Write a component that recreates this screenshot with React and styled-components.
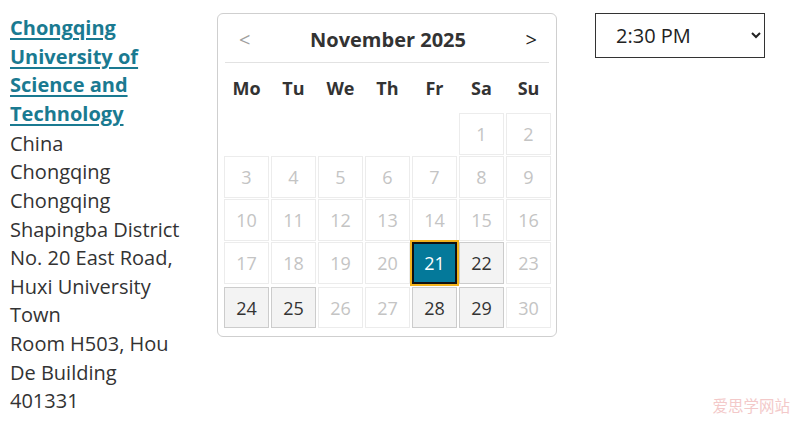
import React from "react";
import styled, { createGlobalStyle } from "styled-components";

const GlobalStyle = createGlobalStyle`
  html, body {
    margin: 0;
    padding: 0;
    background: #ffffff;
  }
  body {
    font-family: "Open Sans", "Noto Sans", sans-serif;
    color: #333333;
  }
`;

const weekDays = ["Mo", "Tu", "We", "Th", "Fr", "Sa", "Su"];

// null = empty slot before the 1st
const days = [
  null, null, null, null, null, 1, 2,
  3, 4, 5, 6, 7, 8, 9,
  10, 11, 12, 13, 14, 15, 16,
  17, 18, 19, 20, 21, 22, 23,
  24, 25, 26, 27, 28, 29, 30,
];
const available = [22, 24, 25, 28, 29];
const selected = 21;

const App = () => {
  return (
    <Page>
      <GlobalStyle />
      <Address>
        <UniLink href="#">Chongqing University of Science and Technology</UniLink>
        <Lines>
          <Line>China</Line>
          <Line>Chongqing</Line>
          <Line>Chongqing</Line>
          <Line>Shapingba District</Line>
          <Line>No. 20 East Road, Huxi University Town</Line>
          <Line>Room H503, Hou De Building</Line>
          <Line>401331</Line>
        </Lines>
      </Address>

      <Calendar>
        <Header>
          <NavButton disabled>&lt;</NavButton>
          <MonthTitle>November 2025</MonthTitle>
          <NavButton>&gt;</NavButton>
        </Header>
        <WeekRow>
          {weekDays.map((d) => (
            <WeekDay key={d}>{d}</WeekDay>
          ))}
        </WeekRow>
        <DayGrid>
          {days.map((d, i) =>
            d === null ? (
              <Blank key={i} />
            ) : (
              <Day
                key={i}
                $state={
                  d === selected ? "selected" : available.includes(d) ? "open" : "off"
                }
              >
                {d}
              </Day>
            )
          )}
        </DayGrid>
      </Calendar>

      <TimeSelect defaultValue="2:30 PM">
        <option>2:00 PM</option>
        <option>2:30 PM</option>
        <option>3:00 PM</option>
      </TimeSelect>

      <Watermark>爱思学网站</Watermark>
    </Page>
  );
};

const Page = styled.div`
  display: flex;
  align-items: flex-start;
  padding: 13px 10px;
  position: relative;
  height: 421px;
  box-sizing: border-box;
  overflow: hidden;
`;

const Address = styled.div`
  width: 185px;
  font-size: 20px;
  line-height: 28.6px;
  margin-top: 1px;
`;

const UniLink = styled.a`
  display: block;
  color: #1a7a91;
  font-weight: 700;
  text-decoration: underline;
  text-decoration-thickness: 2px;
  text-underline-offset: 3px;
`;

const Lines = styled.div`
  margin-top: 1.5px;
`;

const Line = styled.div``;

const Calendar = styled.div`
  margin-left: 22px;
  width: 340px;
  box-sizing: border-box;
  border: 1px solid #cfcfcf;
  border-radius: 6px;
  padding: 0 6px 8px 6px;
`;

const Header = styled.div`
  display: flex;
  align-items: center;
  justify-content: space-between;
  height: 48px;
  border-bottom: 1px solid #e2e2e2;
  padding: 0 12px 0 14px;
  margin: 0 1px;
`;

const NavButton = styled.span`
  font-size: 20px;
  color: ${(p) => (p.disabled ? "#a0a0a0" : "#222222")};
  font-family: "Open Sans", sans-serif;
  padding-top: 2px;
`;

const MonthTitle = styled.span`
  font-size: 20px;
  font-weight: 700;
  color: #333333;
  padding-top: 2px;
`;

const WeekRow = styled.div`
  display: grid;
  grid-template-columns: repeat(7, 45px);
  column-gap: 2px;
  height: 50px;
  align-items: center;
`;

const WeekDay = styled.span`
  text-align: center;
  font-size: 18px;
  font-weight: 700;
  color: #333333;
`;

const DayGrid = styled.div`
  display: grid;
  grid-template-columns: repeat(7, 45px);
  grid-template-rows: repeat(4, 42px) 43px;
  column-gap: 2px;
  row-gap: 1px;
  & > :nth-child(n + 29) {
    margin-top: 2px;
    height: 41px;
  }
`;

const Blank = styled.div``;

const Day = styled.div`
  box-sizing: border-box;
  display: flex;
  align-items: center;
  justify-content: center;
  font-size: 18px;
  border: 1px solid ${(p) => (p.$state === "open" ? "#cccccc" : "#ececec")};
  background: ${(p) => (p.$state === "open" ? "#f3f3f3" : "#ffffff")};
  color: ${(p) => (p.$state === "off" ? "#c4c4c4" : "#333333")};
  ${(p) =>
    p.$state === "selected" &&
    `
    background: #04799a;
    color: #ffffff;
    border: 2px solid #111111;
    outline: 2px solid #f2b31c;
  `}
`;

const TimeSelect = styled.select`
  margin-left: 38px;
  width: 170px;
  height: 45px;
  font-family: "Open Sans", sans-serif;
  font-size: 20px;
  color: #222222;
  background: #ffffff;
  border: 1px solid #333333;
  border-radius: 0;
  padding: 0 10px 0 16px;
`;

const Watermark = styled.div`
  position: absolute;
  right: 5px;
  bottom: 2px;
  font-family: "Noto Sans CJK SC", sans-serif;
  font-size: 15.5px;
  line-height: 20px;
  padding-bottom: 4px;
  color: #f3c9c9;
`;

export default App;
